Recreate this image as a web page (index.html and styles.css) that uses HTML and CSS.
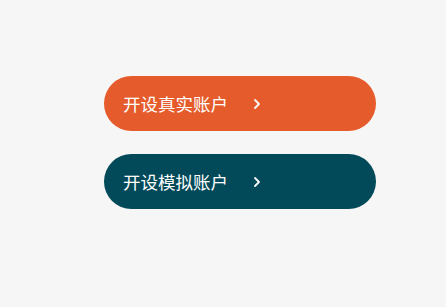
FILE: index.html
```html
<!DOCTYPE html>
<html lang="zh-CN">
<head>
  <meta charset="UTF-8">
  <title>开设账户</title>
  <link rel="stylesheet" href="styles.css">
</head>
<body>
  <div class="actions">
    <a class="account-btn real" href="#">
      <span class="label">开设真实账户</span>
      <svg class="chevron" viewBox="0 0 8 12" width="8" height="12"><path d="M2 2l4 4-4 4" fill="none" stroke="#fff" stroke-width="1.8" stroke-linecap="round" stroke-linejoin="round"/></svg>
    </a>
    <a class="account-btn demo" href="#">
      <span class="label">开设模拟账户</span>
      <svg class="chevron" viewBox="0 0 8 12" width="8" height="12"><path d="M2 2l4 4-4 4" fill="none" stroke="#fff" stroke-width="1.8" stroke-linecap="round" stroke-linejoin="round"/></svg>
    </a>
  </div>
</body>
</html>
```
FILE: styles.css
```css
body {
  margin: 0;
  background: #f6f6f6;
  font-family: "Noto Sans CJK SC", "Noto Sans", sans-serif;
}

.actions {
  display: flex;
  flex-direction: column;
  gap: 23px;
  padding: 76px 0 0 104px;
}

.account-btn {
  display: flex;
  align-items: center;
  width: 272px;
  height: 55px;
  box-sizing: border-box;
  padding-left: 19px;
  border-radius: 28px;
  color: #fff;
  text-decoration: none;
}

.account-btn.real {
  background-color: #e55b2b;
}

.account-btn.demo {
  background-color: #024a59;
}

.label {
  font-size: 17.5px;
  line-height: 1;
}

.chevron {
  margin-left: 25px;
}
```
